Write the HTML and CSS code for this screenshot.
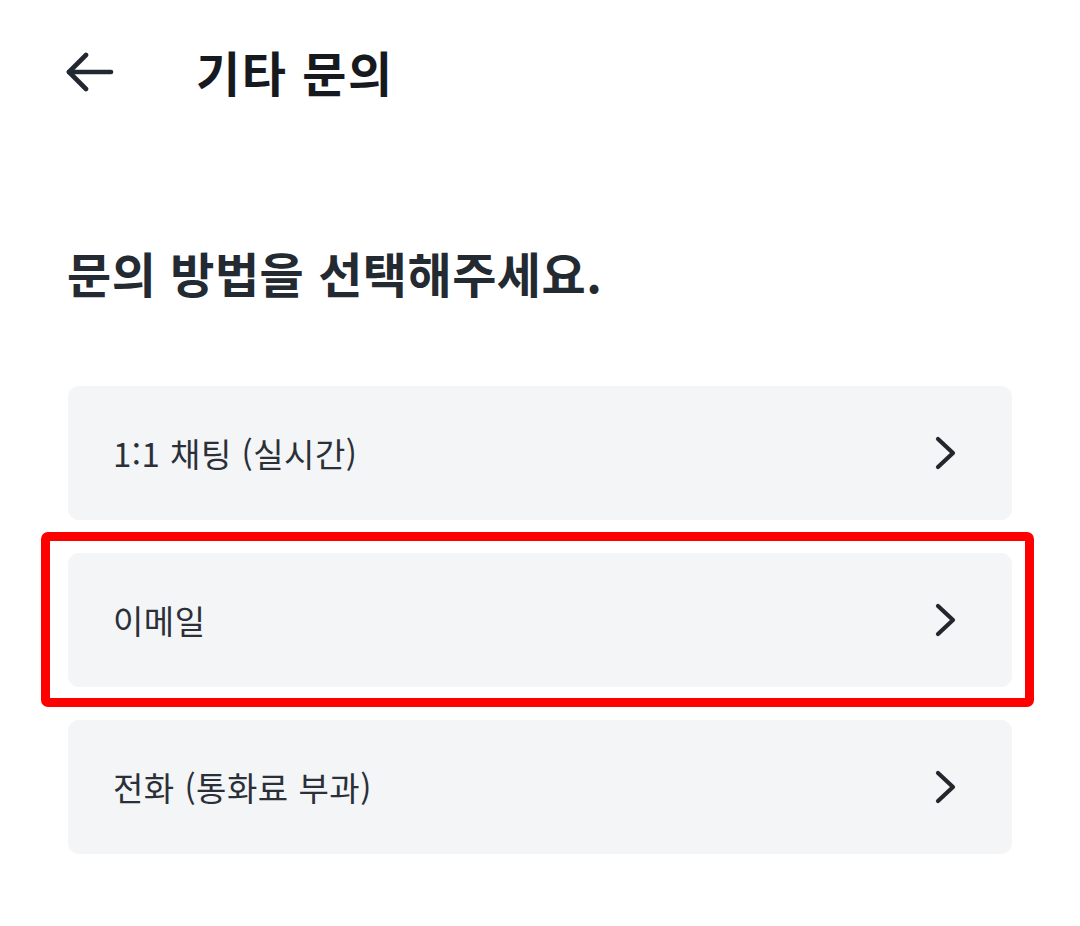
FILE: index.html
```html
<!DOCTYPE html>
<html lang="ko">
<head>
<meta charset="utf-8">
<link rel="stylesheet" href="styles.css">
</head>
<body>
<div class="page">
  <header class="topbar">
    <button class="back" aria-label="뒤로">
      <svg width="48" height="40" viewBox="0 0 48 40" fill="none" stroke="#222831" stroke-width="4.6" stroke-linecap="round" stroke-linejoin="round">
        <path d="M45 20H3"/>
        <path d="M20 3L3 20L20 37"/>
      </svg>
    </button>
    <h1 class="title">기타 문의</h1>
  </header>
  <h2 class="heading">문의 방법을 선택해주세요.</h2>
  <ul class="options">
    <li class="option">
      <span class="label">1:1 채팅 (실시간)</span>
      <svg class="chev" width="22" height="34" viewBox="0 0 22 34" fill="none" stroke="#22272e" stroke-width="4.2" stroke-linecap="round" stroke-linejoin="round"><path d="M3 3L18 17L3 31"/></svg>
    </li>
    <li class="option highlighted">
      <span class="label">이메일</span>
      <svg class="chev" width="22" height="34" viewBox="0 0 22 34" fill="none" stroke="#22272e" stroke-width="4.2" stroke-linecap="round" stroke-linejoin="round"><path d="M3 3L18 17L3 31"/></svg>
    </li>
    <li class="option">
      <span class="label">전화 (통화료 부과)</span>
      <svg class="chev" width="22" height="34" viewBox="0 0 22 34" fill="none" stroke="#22272e" stroke-width="4.2" stroke-linecap="round" stroke-linejoin="round"><path d="M3 3L18 17L3 31"/></svg>
    </li>
  </ul>
</div>
</body>
</html>
```
FILE: styles.css
```css
* { box-sizing: border-box; }
html, body {
  margin: 0;
  padding: 0;
  background: #ffffff;
}
body {
  font-family: "Noto Sans CJK KR", "Noto Sans", sans-serif;
  color: #242a31;
}
.page {
  width: 1080px;
  height: 926px;
  overflow: hidden;
}
.topbar {
  height: 144px;
  display: flex;
  align-items: center;
  padding-left: 66px;
}
.back {
  border: 0;
  background: none;
  padding: 0;
  width: 48px;
  height: 40px;
  display: flex;
  align-items: center;
  justify-content: center;
}
.title {
  margin: 0 0 0 82px;
  font-size: 48px;
  font-weight: 700;
  color: #161a1f;
  line-height: 1.2;
  letter-spacing: 1.5px;
}
.heading {
  margin: 97px 0 0 67px;
  font-size: 48px;
  font-weight: 700;
  line-height: 62px;
  color: #242a31;
  letter-spacing: 0.5px;
}
.options {
  list-style: none;
  margin: 83px 0 0 68px;
  padding: 0;
  width: 944px;
  display: flex;
  flex-direction: column;
  gap: 33px;
}
.option {
  position: relative;
  height: 134px;
  background: #f4f5f7;
  border-radius: 11px;
  display: flex;
  align-items: center;
  justify-content: space-between;
  padding: 0 55px 0 45px;
}
.label {
  font-size: 33px;
  color: #2b3038;
  font-weight: 400;
  letter-spacing: 0.5px;
}
.chev { display: block; }
.highlighted::after {
  content: "";
  position: absolute;
  top: -21px;
  left: -27px;
  right: -22px;
  bottom: -20px;
  border: 9px solid #ff0000;
  border-radius: 7px;
  pointer-events: none;
}
```
